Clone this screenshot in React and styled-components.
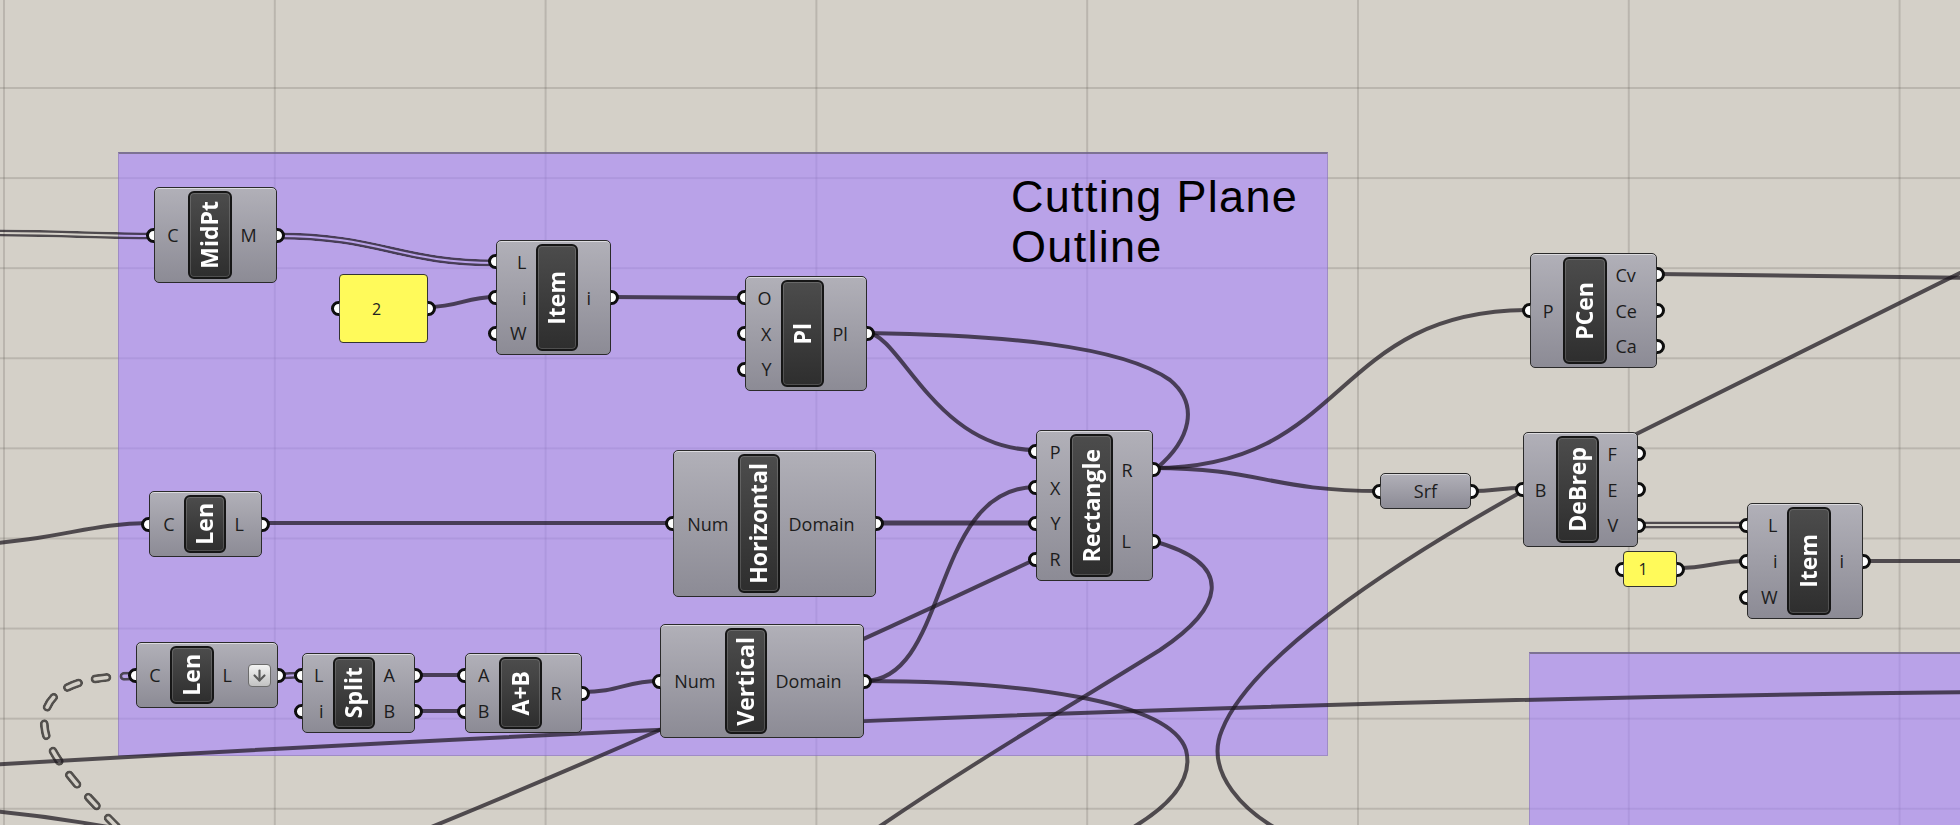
import React from 'react'
import styled, { createGlobalStyle } from 'styled-components'
import { ArrowDown } from 'lucide-react'

const GlobalStyle = createGlobalStyle`
	body {
		margin: 0;
		background: #d4d0c8;
	}
`

const Canvas = styled.div`
	position: relative;
	width: 1960px;
	height: 825px;
	overflow: hidden;
	background-color: #d4d0c8;
	background-image:
		linear-gradient(to right, rgba(80, 76, 70, 0.2) 2px, transparent 2px),
		linear-gradient(to bottom, rgba(80, 76, 70, 0.2) 2px, transparent 2px);
	background-size: 270.8px 100%, 100% 90.1px;
	background-position: 3px 0, 0 87px;
	font-family: "Open Sans", "Noto Sans", sans-serif;
`

const Group = styled.div`
	position: absolute;
	left: ${ p => p.$x }px;
	top: ${ p => p.$y }px;
	width: ${ p => p.$w }px;
	height: ${ p => p.$h }px;
	box-sizing: border-box;
	background: rgba(167, 131, 253, 0.6);
	border: 1px solid rgba(110, 100, 130, 0.35);
	border-top: 2px solid rgba(100, 94, 112, 0.7);
`

const Scribble = styled.div`
	position: absolute;
	left: 1011px;
	top: 172px;
	font-family: "Liberation Sans", Arial, sans-serif;
	font-size: 45px;
	line-height: 50px;
	letter-spacing: 1.3px;
	color: #000;
	white-space: pre;
`

const Wires = styled.svg`
	position: absolute;
	left: 0;
	top: 0;
`

const NodeBox = styled.div`
	position: absolute;
	left: ${ p => p.$x }px;
	top: ${ p => p.$y }px;
	width: ${ p => p.$w }px;
	height: ${ p => p.$h }px;
	box-sizing: border-box;
	display: flex;
	border: 1.5px solid #2a2a2a;
	border-radius: 5px;
	background: linear-gradient(#b1b0b8, #8c8b95);
	box-shadow: inset 0 1px 0 rgba(255, 255, 255, 0.55);
`

const Column = styled.div`
	display: flex;
	flex-direction: column;
	padding: 3px 0;
	${ p => p.$w ? `width: ${ p.$w }px; flex-shrink: 0;` : 'flex: 1;' }
`

const Port = styled.div`
	flex: 1;
	position: relative;
	display: flex;
	align-items: center;
	justify-content: ${ p => p.$side === 'in' ? 'flex-end' : 'flex-start' };
	padding: ${ p => p.$side === 'in' ? '0 9px 0 0' : p.$tool ? '0 6px 0 9px' : '0 0 0 9px' };
	font-size: 18px;
	line-height: 1;
	color: #1c1c1c;
`

const Grip = styled.span`
	position: absolute;
	top: 50%;
	width: 15px;
	height: 15px;
	margin-top: -7.5px;
	box-sizing: border-box;
	border-radius: 50%;
	background: #fff;
	border: 3px solid #0e0e0e;
	${ p => p.$side === 'in'
		? 'left: -9px; clip-path: inset(-2px 45% -2px -2px);'
		: 'right: -9px; clip-path: inset(-2px -2px -2px 45%);' }
`

const Tag = styled.div`
	width: ${ p => p.$w }px;
	flex-shrink: 0;
	margin: 3px 0;
	box-sizing: border-box;
	border: 2px solid #161616;
	border-radius: 6px;
	background: linear-gradient(#4c4c4c, #2e2e2e);
	box-shadow: inset 0 0 0 1px rgba(255, 255, 255, 0.16);
	display: flex;
	align-items: center;
	justify-content: center;
`

const TagText = styled.span`
	writing-mode: vertical-rl;
	transform: rotate(180deg);
	color: #fff;
	font-weight: 700;
	font-size: 23px;
	line-height: 1;
	white-space: nowrap;
`

const Toggle = styled.span`
	margin-left: auto;
	width: 23px;
	height: 23px;
	box-sizing: border-box;
	border: 1px solid #6c6c6c;
	border-radius: 4px;
	background: linear-gradient(#f3f3f3, #c2c2c2);
	display: flex;
	align-items: center;
	justify-content: center;
	color: #595959;
`

const Panel = styled.div`
	position: absolute;
	left: ${ p => p.$x }px;
	top: ${ p => p.$y }px;
	width: ${ p => p.$w }px;
	height: ${ p => p.$h }px;
	box-sizing: border-box;
	border: 1.5px solid #333;
	border-radius: 4px;
	background: #fffa5a;
	display: flex;
	align-items: center;
	justify-content: center;
	padding-right: 14px;
	font-size: 16px;
	color: #222;
`

const Param = styled(NodeBox)`
	align-items: center;
	justify-content: center;
	font-size: 18px;
	color: #1c1c1c;
`

const nodes = [
	{ name: 'MidPt', x: 154, y: 187, w: 123, h: 96, inW: 34, tagW: 44, ins: [ 'C' ], outs: [ 'M' ] },
	{ name: 'Item', x: 496, y: 240, w: 115, h: 115, inW: 40, tagW: 42, ins: [ 'L', 'i', 'W' ], outs: [ 'i' ] },
	{ name: 'Pl', x: 745, y: 276, w: 122, h: 115, inW: 36, tagW: 43, ins: [ 'O', 'X', 'Y' ], outs: [ 'Pl' ] },
	{ name: 'Rectangle', x: 1036, y: 430, w: 117, h: 151, inW: 34, tagW: 43, ins: [ 'P', 'X', 'Y', 'R' ], outs: [ 'R', 'L' ] },
	{ name: 'Horizontal', x: 673, y: 450, w: 203, h: 147, inW: 65, tagW: 42, ins: [ 'Num' ], outs: [ 'Domain' ] },
	{ name: 'Len', x: 149, y: 491, w: 113, h: 66, inW: 35, tagW: 42, ins: [ 'C' ], outs: [ 'L' ] },
	{ name: 'Len', x: 136, y: 642, w: 142, h: 66, inW: 34, tagW: 44, ins: [ 'C' ], outs: [ 'L' ], tool: true },
	{ name: 'Split', x: 302, y: 653, w: 113, h: 80, inW: 31, tagW: 42, ins: [ 'L', 'i' ], outs: [ 'A', 'B' ] },
	{ name: 'A+B', x: 465, y: 653, w: 117, h: 80, inW: 34, tagW: 43, ins: [ 'A', 'B' ], outs: [ 'R' ] },
	{ name: 'Vertical', x: 660, y: 624, w: 204, h: 114, inW: 65, tagW: 42, ins: [ 'Num' ], outs: [ 'Domain' ] },
	{ name: 'PCen', x: 1530, y: 253, w: 127, h: 115, inW: 33, tagW: 44, ins: [ 'P' ], outs: [ 'Cv', 'Ce', 'Ca' ] },
	{ name: 'DeBrep', x: 1523, y: 432, w: 115, h: 115, inW: 33, tagW: 43, ins: [ 'B' ], outs: [ 'F', 'E', 'V' ] },
	{ name: 'Item', x: 1747, y: 503, w: 116, h: 116, inW: 40, tagW: 44, ins: [ 'L', 'i', 'W' ], outs: [ 'i' ] },
]

const panels = [
	{ text: '2', x: 339, y: 274, w: 89, h: 69 },
	{ text: '1', x: 1623, y: 551, w: 54, h: 36 },
]

// wires: single, double (list data) and dashed (tree data)
const wires = [
	{ kind: 'double', d: 'M-20,233 C60,233 100,236 154,236' },
	{ kind: 'double', d: 'M277,236 C380,236 400,263 496,263' },
	{ kind: 'single', d: 'M428,307 C460,307 465,297 496,297' },
	{ kind: 'single', d: 'M611,297 C680,297 680,298 745,298' },
	{ kind: 'single', d: 'M867,333 C900,333 935,450 1036,450' },
	{ kind: 'single', d: 'M867,333 C1000,335 1120,345 1170,380 C1200,405 1190,440 1157,468' },
	{ kind: 'single', d: 'M1153,468 C1260,468 1270,491 1380,491' },
	{ kind: 'single', d: 'M1153,468 C1350,468 1330,310 1530,310' },
	{ kind: 'single', d: 'M1471,491 C1495,491 1500,488 1523,488' },
	{ kind: 'single', d: 'M1300,840 C1240,815 1205,770 1222,730 C1250,660 1380,570 1530,487 L1990,258' },
	{ kind: 'single', d: 'M1153,541 C1240,565 1220,610 1160,650 C1080,700 960,770 860,840' },
	{ kind: 'single', d: 'M864,681 C1020,681 1170,700 1186,750 C1195,785 1160,815 1110,840' },
	{ kind: 'single', d: 'M864,681 C950,681 930,487 1036,487' },
	{ kind: 'single', d: 'M350,860 C550,780 800,670 1036,559' },
	{ kind: 'single', d: 'M-30,545 C60,540 90,523 149,523' },
	{ kind: 'single', d: 'M262,523 L673,523' },
	{ kind: 'thick', d: 'M876,523 L1036,523' },
	{ kind: 'tree', d: 'M136,676 C60,676 40,700 45,730 C50,760 90,800 130,840' },
	{ kind: 'double', d: 'M278,676 C290,676 290,675 302,675' },
	{ kind: 'single', d: 'M415,675 L465,675' },
	{ kind: 'single', d: 'M415,711 L465,711' },
	{ kind: 'single', d: 'M582,692 C620,692 625,681 660,681' },
	{ kind: 'single', d: 'M-30,766 C500,735 1200,700 1990,692' },
	{ kind: 'single', d: 'M-20,810 C50,816 110,826 200,845' },
	{ kind: 'single', d: 'M1657,274 L1990,278' },
	{ kind: 'double', d: 'M1638,525 L1747,525' },
	{ kind: 'single', d: 'M1677,568 C1710,568 1715,561 1747,561' },
	{ kind: 'single', d: 'M1863,561 L1990,561' },
]

const WIRE = 'rgba(28, 22, 30, 0.72)'

const Wire = ({ w, id }) => {
	if (w.kind === 'single' || w.kind === 'thick') {
		return <path d={ w.d } fill="none" stroke={ WIRE } strokeWidth={ w.kind === 'thick' ? 5 : 4 } />
	}
	const tree = w.kind === 'tree'
	const dash = tree ? '12 17' : undefined
	const cap = tree ? 'round' : 'butt'
	return (
		<g>
			<mask id={ id } maskUnits="userSpaceOnUse" x="-50" y="-50" width="2100" height="950">
				<path d={ w.d } fill="none" stroke="#fff" strokeWidth={ tree ? 9 : 7 } strokeDasharray={ dash } strokeLinecap={ cap } />
				<path d={ w.d } fill="none" stroke="#000" strokeWidth={ tree ? 3.5 : 2 } strokeDasharray={ dash } strokeLinecap={ cap } />
			</mask>
			<path d={ w.d } fill="none" stroke={ tree ? 'rgba(40, 38, 36, 0.75)' : WIRE } strokeWidth={ tree ? 9 : 7 }
				strokeDasharray={ dash } strokeLinecap={ cap } mask={ `url(#${ id })` } />
		</g>
	)
}

const Node = ({ n }) => (
	<NodeBox $x={ n.x } $y={ n.y } $w={ n.w } $h={ n.h }>
		<Column $w={ n.inW - 1.5 }>
			{ n.ins.map(p => (
				<Port key={ p } $side="in"><Grip $side="in" />{ p }</Port>
			)) }
		</Column>
		<Tag $w={ n.tagW }><TagText>{ n.name }</TagText></Tag>
		<Column>
			{ n.outs.map(p => (
				<Port key={ p } $side="out" $tool={ n.tool }>
					<Grip $side="out" />{ p }
					{ n.tool && <Toggle><ArrowDown size={ 17 } strokeWidth={ 3 } /></Toggle> }
				</Port>
			)) }
		</Column>
	</NodeBox>
)

const App = () => (
	<>
		<GlobalStyle />
		<Canvas>
			<Group $x={ 118 } $y={ 152 } $w={ 1210 } $h={ 604 } />
			<Group $x={ 1529 } $y={ 652 } $w={ 460 } $h={ 200 } />
			<Scribble>{ 'Cutting Plane\nOutline' }</Scribble>
			<Wires width="1960" height="825" viewBox="0 0 1960 825">
				{ wires.map((w, i) => <Wire key={ i } w={ w } id={ `wm${ i }` } />) }
			</Wires>
			{ nodes.map((n, i) => <Node key={ i } n={ n } />) }
			{ panels.map(p => (
				<Panel key={ p.text } $x={ p.x } $y={ p.y } $w={ p.w } $h={ p.h }>
					<Grip $side="in" />
					{ p.text }
					<Grip $side="out" />
				</Panel>
			)) }
			<Param $x={ 1380 } $y={ 473 } $w={ 91 } $h={ 36 }>
				<Grip $side="in" />
				Srf
				<Grip $side="out" />
			</Param>
		</Canvas>
	</>
)

export default App
